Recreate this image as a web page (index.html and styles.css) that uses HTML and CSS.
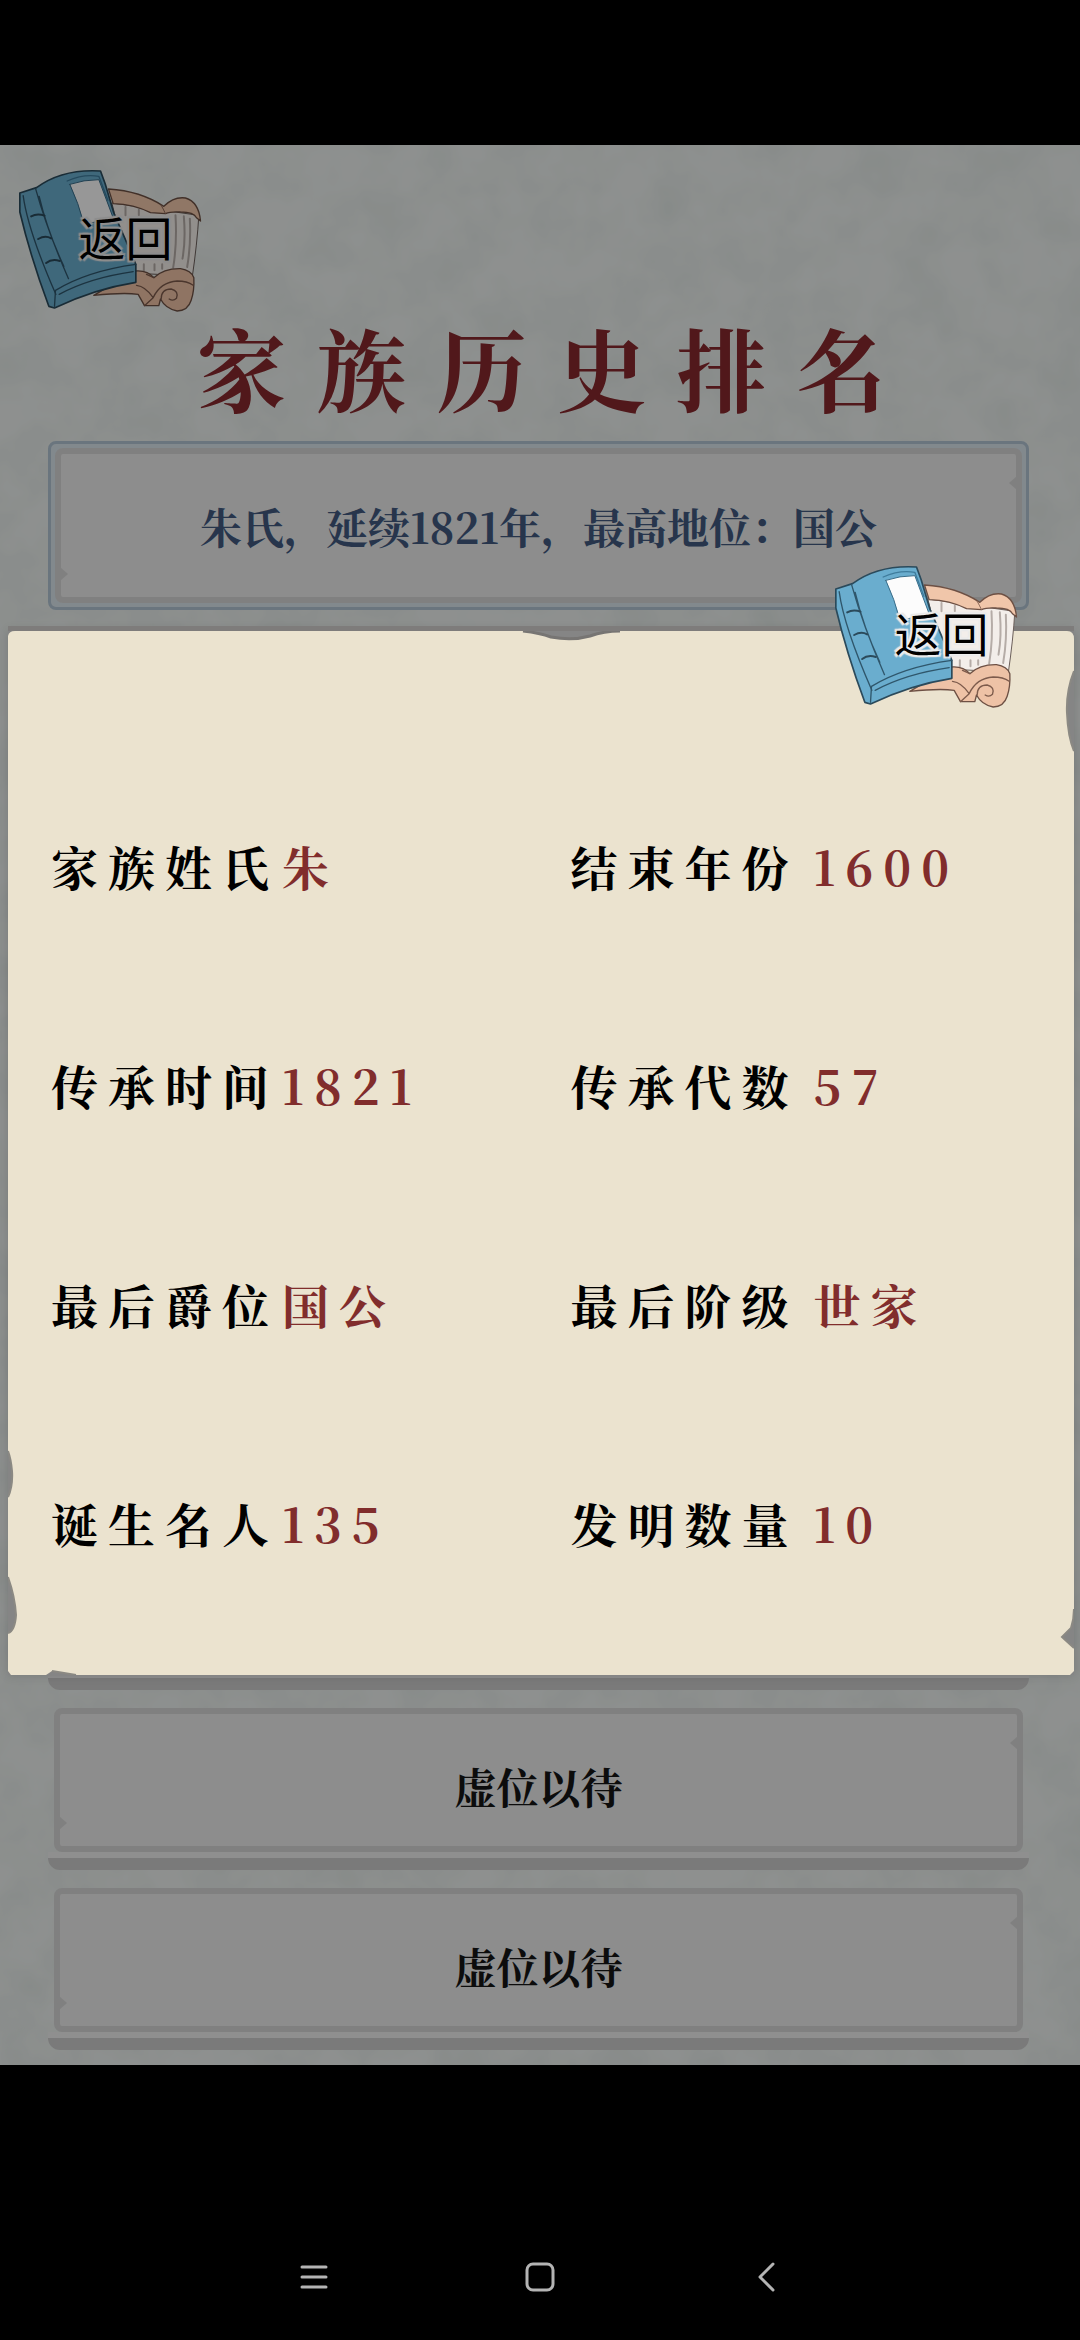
FILE: index.html
```
<!DOCTYPE html>
<html lang="zh-CN">
<head>
    <meta charset="UTF-8">
    <meta name="viewport" content="width=device-width, initial-scale=1.0">
    <title>家族历史排名</title>
    <link rel="stylesheet" href="styles.css">
</head>
<body>
    <!-- shared drawings -->
    <svg class="defs" aria-hidden="true">
        <symbol id="book" viewBox="100 70 560 435">
            <g stroke-linejoin="round" stroke-linecap="round">
                <!-- scroll -->
                <path d="M385 178 L560 203 L645 215 Q640 300 625 402 L520 392 L440 388 Z" fill="#f3eeea" stroke="#6b5f5a" stroke-width="3"/>
                <path d="M425 190 V215 M465 198 V215 M575 215 Q580 300 568 372 M600 218 Q606 290 596 345 M618 225 Q622 300 610 370 M480 362 V385 M512 362 V380 M535 362 V375" fill="none" stroke="#b5aca7" stroke-width="6"/>
                <path d="M374 136 Q470 142 540 188 Q570 158 605 163 Q645 175 650 232 L638 222 Q630 205 590 205 Q560 203 545 210 L500 207 Q450 182 388 180 Z" fill="#f0c6aa" stroke="#6d5044" stroke-width="4"/>
                <path d="M545 210 Q538 195 532 185" fill="none" stroke="#8d6a5a" stroke-width="3"/>
                <path d="M452 382 Q490 378 510 402 Q540 374 590 375 Q622 380 630 402 Q632 440 622 470 Q612 502 580 502 Q545 495 530 466 L525 486 H482 L463 452 Q420 446 330 455 L380 425 L455 415 Z" fill="#eec2a6" stroke="#6d5044" stroke-width="4"/>
                <path d="M510 402 L488 392 M458 425 Q485 428 508 462 Q530 415 580 412 Q610 412 628 425 M532 466 Q532 436 562 436 Q586 442 578 464 Q568 474 556 466 M482 486 L508 462" fill="none" stroke="#7d5b4c" stroke-width="4"/>
                <!-- blue book -->
                <path d="M108 148 L158 132 Q235 75 350 82 L364 120 L390 208 L430 300 L456 362 V416 Q330 436 212 493 L195 488 Q140 340 108 205 Z" fill="#6aadce" stroke="#2b4a5b" stroke-width="5"/>
                <path d="M258 122 Q300 108 345 108 L390 228 L300 240 Q285 180 258 122 Z" fill="#fcfcfc" stroke="#3a6d89" stroke-width="3"/>
                <path d="M118 156 Q132 260 216 452 M155 134 Q190 260 254 405 M166 158 Q190 260 240 368" fill="none" stroke="#2f566b" stroke-width="4"/>
                <path d="M142 218 Q160 208 182 216 M163 286 Q184 274 202 284 M187 358 Q204 344 228 352" fill="none" stroke="#2b4a5b" stroke-width="6"/>
                <path d="M212 488 L215 440 Q310 382 456 362 M226 452 Q320 402 448 384" fill="none" stroke="#2f566b" stroke-width="4"/>
                <path d="M250 112 Q300 90 345 98 L372 170" fill="none" stroke="#3f7c9c" stroke-width="4"/>
            </g>
        </symbol>
    </svg>

    <main class="screen">
        <div class="stage">
            <svg class="paper" aria-hidden="true">
                <filter id="mottle" x="0" y="0" width="100%" height="100%">
                    <feTurbulence type="fractalNoise" baseFrequency="0.02" numOctaves="3" seed="8"/>
                    <feColorMatrix values="0 0 0 0 0.5  0 0 0 0 0.58  0 0 0 0 0.55  0.4 0 0 0 -0.12"/>
                </filter>
                <rect width="100%" height="100%" filter="url(#mottle)"/>
            </svg>

            <div class="ranking">
                <header class="top">
                    <button class="back">
                        <svg><use href="#book"/></svg>
                        <span>返回</span>
                    </button>
                </header>
                <h1 class="title">家族历史排名</h1>
                <button class="first">
                    <span class="plate">朱氏，延续1821年，最高地位：国公</span>
                </button>
                <ol class="rows">
                    <li class="row"><button class="plate"></button></li>
                    <li class="row"><button class="plate">虚位以待</button></li>
                    <li class="row"><button class="plate">虚位以待</button></li>
                </ol>
            </div>

            <div class="overlay">
                <section class="modal" role="dialog" aria-label="家族">
                    <svg class="modal-paper" viewBox="0 0 1066 1044" preserveAspectRatio="none" aria-hidden="true">
                        <path d="M0 5 Q1 0 7 0 H515 Q532 2 543 6 Q564 10 582 5 Q596 0 612 0 H1059 Q1066 0 1066 8 V40 Q1058 60 1059 82 Q1060 106 1066 120 V978 Q1066 988 1063 997 L1054 1006 L1066 1017 V1040 L1062 1044 H68 L44 1040 L38 1044 H3 L0 1040 V1002 Q7 1000 8 984 Q7 966 0 946 V866 Q5 855 4 840 Q3 828 0 820 Z" fill="#ebe3cf"/>
                        <path d="M515 0 Q532 2 543 6 Q564 10 582 5 Q596 0 612 0" fill="none" stroke="#777573" stroke-width="3"/>
                        <path d="M1066 40 Q1058 60 1059 82 Q1060 106 1066 120 M1066 978 Q1066 988 1063 997 L1054 1006 L1066 1017 M0 1002 Q7 1000 8 984 Q7 966 0 946 M0 866 Q5 855 4 840 Q3 828 0 820 M68 1044 L44 1040" fill="none" stroke="#8b8983" stroke-width="2"/>
                    </svg>
                    <button class="back modal-back">
                        <svg><use href="#book"/></svg>
                        <span>返回</span>
                    </button>
                    <dl class="stats">
                        <div class="stat"><dt>家族姓氏</dt><dd>朱</dd></div>
                        <div class="stat"><dt>结束年份</dt><dd>1600</dd></div>
                        <div class="stat"><dt>传承时间</dt><dd>1821</dd></div>
                        <div class="stat"><dt>传承代数</dt><dd>57</dd></div>
                        <div class="stat"><dt>最后爵位</dt><dd>国公</dd></div>
                        <div class="stat"><dt>最后阶级</dt><dd>世家</dd></div>
                        <div class="stat"><dt>诞生名人</dt><dd>135</dd></div>
                        <div class="stat"><dt>发明数量</dt><dd>10</dd></div>
                    </dl>
                </section>
            </div>
        </div>
    </main>

    <nav class="system-nav">
        <button aria-label="菜单">
            <svg width="32" height="32" viewBox="0 0 32 32"><path d="M4 6h24M4 16h24M4 26h24"/></svg>
        </button>
        <button aria-label="主页">
            <svg width="32" height="32" viewBox="0 0 32 32"><rect x="3" y="3" width="26" height="26" rx="6"/></svg>
        </button>
        <button aria-label="后退">
            <svg width="32" height="32" viewBox="0 0 32 32"><path d="M23 3L10 16L23 29"/></svg>
        </button>
    </nav>
</body>
</html>
```

FILE: styles.css
```
* {
    box-sizing: border-box;
}
body {
    margin: 0;
    min-height: 100vh;
    display: flex;
    flex-direction: column;
    background-color: black;
    font-family: "Noto Serif CJK SC", "Noto Sans CJK SC", serif;
    font-weight: bold;
    font-kerning: none;
}
button {
    border: none;
    background: none;
    padding: 0;
    font: inherit;
    font-kerning: none;
    color: inherit;
    cursor: pointer;
}
.defs {
    display: none;
}
.screen {
    flex: 1;
    display: flex;
    flex-direction: column;
    justify-content: center;
}
.stage {
    position: relative;
    aspect-ratio: 9 / 16;
    background-color: #edf1ef;
    overflow: hidden;
}
.paper {
    position: absolute;
    width: 100%;
    height: 100%;
}

/* ranking page */
.ranking {
    position: relative;
    padding: 22px 51px 0 48px;
}
.top {
    display: flex;
    margin-left: -31px;
}
.back {
    display: grid;
    align-items: center;
    width: 187px;
    height: 145px;
}
.back svg,
.back span {
    grid-area: 1 / 1;
}
.back svg {
    width: 100%;
    height: 100%;
}
.back span {
    position: relative;
    padding: 0 0 8px 30px;
    font-family: "Noto Sans CJK SC", sans-serif;
    font-size: 47px;
    line-height: 50px;
    font-weight: 400;
    color: black;
    text-shadow: 0 0 3px white, 2px 2px 1px #e8e8e8, -2px -2px 1px #e8e8e8, 2px -2px 1px #e8e8e8, -2px 2px 1px #e8e8e8;
}
.title {
    margin: 0;
    padding-left: 36px;
    height: 129px;
    line-height: 108px;
    font-size: 90px;
    letter-spacing: 30px;
    text-align: center;
    white-space: nowrap;
    color: #87292d;
}
.plate {
    position: relative;
    display: flex;
    align-items: center;
    justify-content: center;
    width: 100%;
    height: 144px;
    border: 6px solid #d6d6d6;
    border-radius: 8px;
    background-color: #ebebeb;
    font-size: 42px;
    color: #151515;
}
/* chipped edges */
.plate::before,
.plate::after {
    content: "";
    position: absolute;
    width: 8px;
    height: 14px;
    background-color: #d6d6d6;
}
.plate::before {
    left: -1px;
    bottom: 16px;
    clip-path: polygon(0 0, 100% 50%, 0 100%);
}
.plate::after {
    right: -1px;
    top: 22px;
    clip-path: polygon(100% 0, 0 50%, 100% 100%);
}
.first {
    display: block;
    width: 100%;
    height: 169px;
    padding: 4px;
    border: 3px solid #b1c3d2;
    border-radius: 8px;
    background-color: #d9e4ec;
}
.first .plate {
    height: 100%;
    color: #41597f;
}
.rows {
    margin: 900px 0 0;
    padding: 0;
    list-style: none;
}
.row {
    height: 180px;
    padding: 18px 6px 0;
}
.row .plate {
    padding-top: 12px;
}
/* thick lower edge */
.row::after {
    content: "";
    display: block;
    height: 6px;
    margin: 0 -6px;
    border-bottom: 12px solid #cbcbcb;
    border-radius: 0 0 12px 12px;
    background-color: #efefef;
}

/* family details */
.overlay {
    position: absolute;
    inset: 0;
    display: flex;
    align-items: center;
    padding: 96px 6px 0 8px;
    background-color: rgba(0, 0, 0, 0.4);
}
.modal {
    position: relative;
    width: 100%;
    padding: 125px 24px 43px 43px;
    box-shadow: 0 -5px 0 #7e7c7b, 0 0 10px rgba(0, 0, 0, 0.15);
    background-color: #858585;
}
.modal-paper {
    position: absolute;
    left: 0;
    top: 0;
    width: 100%;
    height: 100%;
}
.modal-back {
    position: absolute;
    right: 54px;
    top: -68px;
}
.stats {
    position: relative;
    display: grid;
    grid-template-columns: 52fr 48fr;
    margin: 0;
}
.stat {
    display: flex;
    align-items: center;
    height: 219px;
    font-size: 47px;
    letter-spacing: 10px;
    white-space: nowrap;
}
.stat dt {
    color: black;
}
.stat dd {
    margin: 0 0 0 3px;
    color: #812d2c;
}
.stat:nth-child(even) dd {
    margin-left: 15px;
}

/* phone buttons */
.system-nav {
    display: flex;
    justify-content: center;
    height: 130px;
}
.system-nav button {
    display: flex;
    align-items: center;
    justify-content: center;
    width: 226px;
    padding-top: 4px;
}
.system-nav svg {
    fill: none;
    stroke: #b4b4b4;
    stroke-width: 3;
    stroke-linecap: round;
    stroke-linejoin: round;
}
```
